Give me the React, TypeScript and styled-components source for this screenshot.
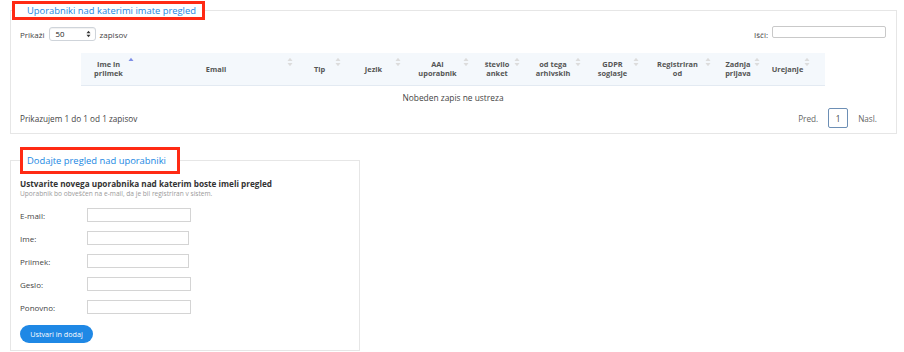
import React from "react";
import styled, { createGlobalStyle } from "styled-components";

const Global = createGlobalStyle`
  html, body { margin: 0; padding: 0; background: #fff; }
  body { font-family: "Open Sans", "Liberation Sans", sans-serif; color: #444; }
  * { box-sizing: border-box; }
`;

const Page = styled.div`
  padding: 1px 7px 4px 10px;
  width: 904px;
`;

const Fieldset = styled.fieldset<{ $width?: number; $mt?: number }>`
  margin: ${(p) => p.$mt ?? 0}px 0 0 0;
  padding: 0;
  border: 1px solid #e6e6e6;
  width: ${(p) => (p.$width ? `${p.$width}px` : "auto")};
  min-width: 0;
`;

const Legend = styled.legend<{ $ml: number; $pl: number; $pr: number; $pv: number }>`
  margin-left: ${(p) => p.$ml}px;
  padding: ${(p) => p.$pv}px ${(p) => p.$pr}px ${(p) => p.$pv}px ${(p) => p.$pl}px;
  border: 3px solid #ff2a14;
  color: #2188e3;
  font-size: 9.4px;
  line-height: 13px;
  white-space: nowrap;
`;

const Body = styled.div<{ $pt: number; $pb: number }>`
  padding: ${(p) => p.$pt}px 10px ${(p) => p.$pb}px 9px;
`;

const Controls = styled.div`
  display: flex;
  align-items: center;
  justify-content: space-between;
  height: 14px;
  font-size: 8px;
  color: #444;
`;

const Inline = styled.div`
  display: flex;
  align-items: center;
  gap: 4px;
`;

const Select = styled.div`
  width: 47px;
  height: 14px;
  border: 1px solid #cfd4da;
  border-radius: 3px;
  display: flex;
  align-items: center;
  justify-content: space-between;
  padding: 0 4px 0 6px;
  font-size: 7.8px;
  color: #222;
  box-shadow: inset 0 1px 1px rgba(0, 0, 0, 0.06);
`;

const SearchInput = styled.div`
  width: 114px;
  height: 12px;
  border: 1px solid #c9c9c9;
  border-radius: 2px;
  margin-top: -4px;
`;

const TableWrap = styled.div`
  margin: 12px auto 0;
  width: 744px;
`;

const HeaderRow = styled.div`
  display: grid;
  grid-template-columns: 56px 159px 48px 60px 68px 51px 61px 58px 72px 49px 62px;
  height: 33px;
  background: #f4f8fc;
  border-bottom: 1px solid #e3eaf2;
`;

const HeadCell = styled.div<{ $pr?: number }>`
  display: flex;
  align-items: center;
  padding: 0 ${(p) => p.$pr ?? 3}px 0 8px;
  font-size: 7.4px;
  line-height: 9px;
  font-weight: 700;
  color: #555;
`;

const HeadLabel = styled.span`
  flex: 1;
  text-align: center;
`;

const SortIcon = styled.svg`
  width: 6px;
  height: 10px;
  flex: none;
  align-self: flex-start;
  margin-top: 4px;
`;

const EmptyRow = styled.div`
  height: 22px;
  display: flex;
  align-items: center;
  justify-content: center;
  font-size: 8.4px;
  color: #444;
`;

const Footer = styled.div`
  display: flex;
  align-items: center;
  justify-content: space-between;
  height: 20px;
  font-size: 8.2px;
  color: #444;
`;

const Pager = styled.div`
  display: flex;
  align-items: center;
  gap: 10px;
  color: #666;
  margin-right: 9px;
`;

const PageBox = styled.div`
  width: 20px;
  height: 20px;
  border: 1px solid #6d8fb5;
  border-radius: 2px;
  display: flex;
  align-items: center;
  justify-content: center;
  color: #444;
`;

const Heading = styled.div`
  font-size: 8.2px;
  font-weight: 700;
  color: #333;
  line-height: 12px;
`;

const Sub = styled.div`
  font-size: 6.6px;
  color: #9a9a9a;
  line-height: 8px;
`;

const FormRows = styled.div`
  margin-top: 10px;
  display: flex;
  flex-direction: column;
  gap: 9px;
`;

const Row = styled.div`
  display: flex;
  align-items: center;
  height: 14px;
`;

const Label = styled.span`
  width: 67px;
  font-size: 8px;
  color: #444;
`;

const Input = styled.div<{ $w: number }>`
  width: ${(p) => p.$w}px;
  height: 14px;
  border: 1px solid #d4d4d4;
`;

const Button = styled.button`
  margin-top: 11px;
  width: 73px;
  height: 18px;
  border: none;
  border-radius: 9px;
  background: #1f88e5;
  color: #fff;
  font-family: inherit;
  font-size: 7.2px;
  padding: 0;
  display: block;
`;

const Sort = ({ active }: { active?: boolean }) => (
  <SortIcon viewBox="0 0 6 10">
    <polygon points="0.5,4 3,0.8 5.5,4" fill={active ? "#7e8ee6" : "#dcdcdc"} />
    {!active && <polygon points="0.5,6 3,9.2 5.5,6" fill="#dcdcdc" />}
  </SortIcon>
);

const columns: { label: React.ReactNode; active?: boolean; pr?: number }[] = [
  { label: <>Ime in<br />priimek</>, active: true },
  { label: "Email" },
  { label: "Tip" },
  { label: "Jezik" },
  { label: <>AAI<br />uporabnik</> },
  { label: <>število<br />anket</> },
  { label: <>od tega<br />arhivskih</> },
  { label: <>GDPR<br />soglasje</> },
  { label: <>Registriran<br />od</> },
  { label: <>Zadnja<br />prijava</> },
  { label: "Urejanje", pr: 15 },
];

const formRows = [
  { label: "E-mail:", w: 104 },
  { label: "Ime:", w: 102 },
  { label: "Priimek:", w: 102 },
  { label: "Geslo:", w: 104 },
  { label: "Ponovno:", w: 104 },
];

export default function App() {
  return (
    <Page>
      <Global />
      <Fieldset>
        <Legend $ml={1} $pl={12} $pr={6} $pv={0}>
          Uporabniki nad katerimi imate pregled
        </Legend>
        <Body $pt={7} $pb={5}>
          <Controls>
            <Inline>
              <span>Prikaži</span>
              <Select>
                <span>50</span>
                <svg width="5" height="8" viewBox="0 0 5 8">
                  <polygon points="0.5,3.2 2.5,0.8 4.5,3.2" fill="#333" />
                  <polygon points="0.5,4.8 2.5,7.2 4.5,4.8" fill="#333" />
                </svg>
              </Select>
              <span>zapisov</span>
            </Inline>
            <Inline>
              <span>Išči:</span>
              <SearchInput />
            </Inline>
          </Controls>
          <TableWrap>
            <HeaderRow>
              {columns.map((c, i) => (
                <HeadCell key={i} $pr={c.pr}>
                  <HeadLabel>{c.label}</HeadLabel>
                  <Sort active={c.active} />
                </HeadCell>
              ))}
            </HeaderRow>
            <EmptyRow>Nobeden zapis ne ustreza</EmptyRow>
          </TableWrap>
          <Footer>
            <span>Prikazujem 1 do 1 od 1 zapisov</span>
            <Pager>
              <span>Pred.</span>
              <PageBox>1</PageBox>
              <span>Nasl.</span>
            </Pager>
          </Footer>
        </Body>
      </Fieldset>

      <Fieldset $width={350} $mt={13}>
        <Legend $ml={9} $pl={4} $pr={11} $pv={4}>
          Dodajte pregled nad uporabniki
        </Legend>
        <Body $pt={4} $pb={7}>
          <Heading>Ustvarite novega uporabnika nad katerim boste imeli pregled</Heading>
          <Sub>Uporabnik bo obveščen na e-mail, da je bil registriran v sistem.</Sub>
          <FormRows>
            {formRows.map((r) => (
              <Row key={r.label}>
                <Label>{r.label}</Label>
                <Input $w={r.w} />
              </Row>
            ))}
          </FormRows>
          <Button>Ustvari in dodaj</Button>
        </Body>
      </Fieldset>
    </Page>
  );
}
